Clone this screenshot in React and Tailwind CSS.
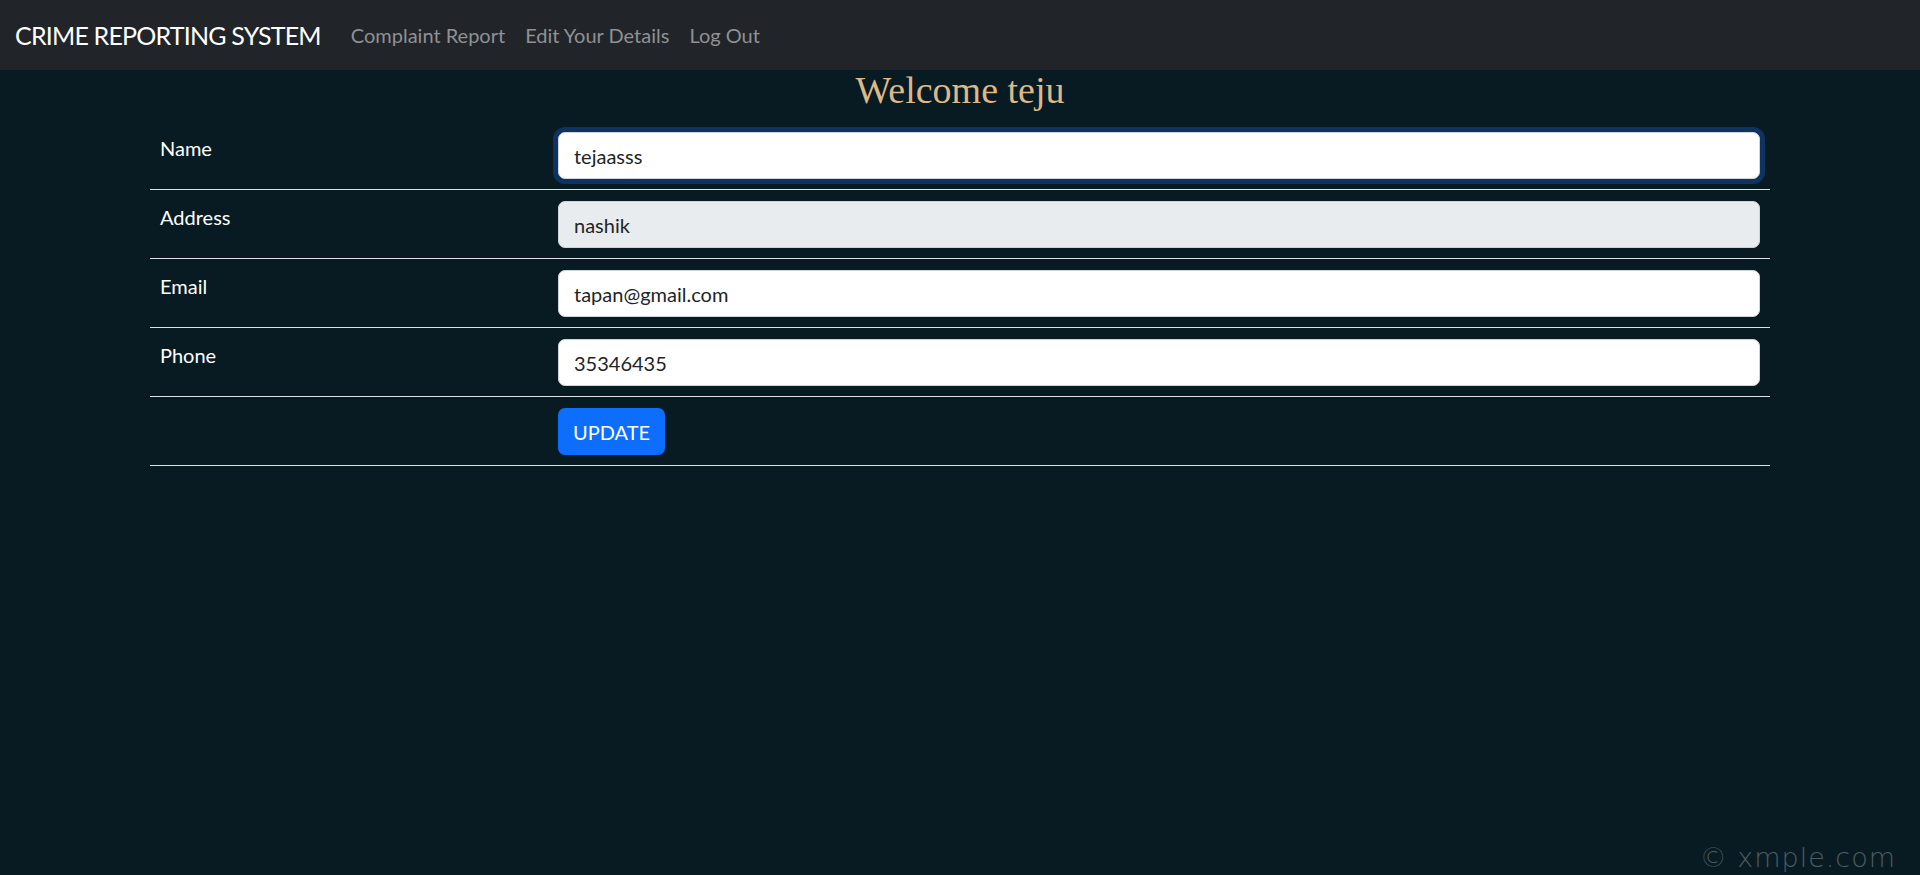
export default function App() {
  const rows = [
    { label: 'Name', value: 'tejaasss', focused: true },
    { label: 'Address', value: 'nashik', readOnly: true },
    { label: 'Email', value: 'tapan@gmail.com' },
    { label: 'Phone', value: '35346435' },
  ];

  return (
    <div
      className="relative min-h-[875px] bg-[#081b22] text-[20px] leading-[30px]"
      style={{ fontFamily: 'Lato, "Liberation Sans", Arial, sans-serif' }}
    >
      {/* Navbar */}
      <nav className="flex h-[70px] items-center bg-[#212529] px-[15px]">
        <a href="#" className="mr-[20px] text-[25px] leading-[37px] tracking-[-0.8px] text-white">
          CRIME REPORTING SYSTEM
        </a>
        <ul className="flex">
          {['Complaint Report', 'Edit Your Details', 'Log Out'].map((item) => (
            <li key={item}>
              <a href="#" className="block px-[10px] py-[10px] text-[#8f9194]">
                {item}
              </a>
            </li>
          ))}
        </ul>
      </nav>

      {/* Content */}
      <div className="mx-auto w-[1620px]">
        <h2
          className="-mt-[3px] text-center text-[38px] leading-[46px] text-[#deb887]"
          style={{ fontFamily: 'Georgia, "Liberation Serif", serif' }}
        >
          Welcome teju
        </h2>

        <div className="mt-[8px] border-b border-[#dee2e6]">
          {rows.map((row) => (
            <div key={row.label} className="flex h-[69px] border-b border-[#dee2e6]">
              <div className="w-[398px] px-[10px] pt-[12px] text-white">{row.label}</div>
              <div className="flex-1 px-[10px] pt-[11px]">
                <input
                  type="text"
                  defaultValue={row.value}
                  readOnly={row.readOnly}
                  spellCheck={false}
                  className={
                    'block h-[47px] w-full rounded-[7px] border px-[15px] text-[20px] text-[#212529] outline-none ' +
                    (row.readOnly
                      ? 'border-[#ced4da] bg-[#e9ecef] '
                      : 'border-[#ced4da] bg-white ') +
                    (row.focused ? 'border-[#86b7fe] shadow-[0_0_0_5px_#0f3360]' : '')
                  }
                />
              </div>
            </div>
          ))}
          <div className="flex h-[68px]">
            <div className="w-[398px]" />
            <div className="flex-1 px-[10px] pt-[11px]">
              <button className="h-[47px] rounded-[7px] bg-[#0d6efd] px-[15px] text-[20px] text-white">
                UPDATE
              </button>
            </div>
          </div>
        </div>
      </div>

      {/* Watermark */}
      <div
        className="absolute bottom-[2px] right-[24px] text-[27px] font-light tracking-[1px] text-[#4d5c62]"
        style={{ fontFamily: '"DejaVu Sans", sans-serif' }}
      >
        © xmple.com
      </div>
    </div>
  );
}
